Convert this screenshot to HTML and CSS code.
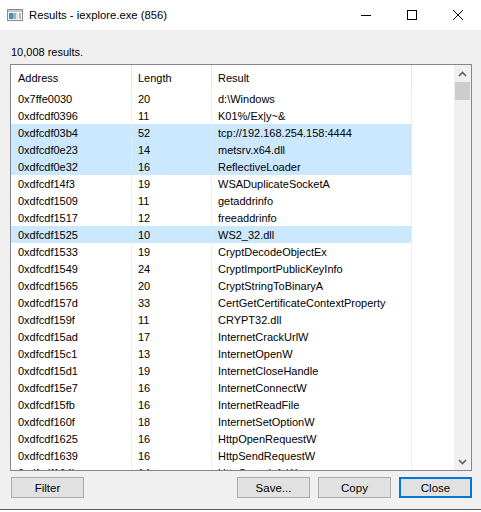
FILE: index.html
```html
<!DOCTYPE html>
<html>
<head>
<meta charset="utf-8">
<link rel="stylesheet" href="styles.css">
</head>
<body>
<div class="window">
  <div class="titlebar">
    <svg class="appicon" width="16" height="12" viewBox="0 0 16 12">
      <rect x="0.5" y="0.5" width="15" height="11" fill="#f4f4f4" stroke="#8a8a8a"/>
      <rect x="1" y="1" width="14" height="2" fill="#c8c8c8"/>
      <rect x="2" y="4" width="4" height="6" fill="#4b8fb0"/>
      <rect x="6" y="4" width="3" height="6" fill="#8fc0a8"/>
      <rect x="9" y="4" width="2" height="6" fill="#d8e6e0"/>
      <rect x="12" y="4" width="2" height="6" fill="#b0b8c0"/>
    </svg>
    <span class="title">Results - iexplore.exe (856)</span>
    <div class="caption-buttons">
      <div class="cbtn">
        <svg width="10" height="10" viewBox="0 0 10 10"><line x1="0" y1="5.5" x2="10" y2="5.5" stroke="#000" stroke-width="1"/></svg>
      </div>
      <div class="cbtn">
        <svg width="10" height="10" viewBox="0 0 10 10"><rect x="0.5" y="0.5" width="9" height="9" fill="none" stroke="#000" stroke-width="1"/></svg>
      </div>
      <div class="cbtn">
        <svg width="10" height="10" viewBox="0 0 10 10"><path d="M0 0 L10 10 M10 0 L0 10" stroke="#000" stroke-width="1"/></svg>
      </div>
    </div>
  </div>
  <div class="content">
    <div class="count">10,008 results.</div>
    <div class="list">
      <div class="table">
        <div class="row header"><div class="c">Address</div><div class="c">Length</div><div class="c">Result</div><div class="c"></div></div>
        <div class="row"><div class="c">0x7ffe0030</div><div class="c">20</div><div class="c">d:\Windows</div><div class="c"></div></div>
        <div class="row"><div class="c">0xdfcdf0396</div><div class="c">11</div><div class="c">K01%/Ex|y~&amp;</div><div class="c"></div></div>
        <div class="row sel"><div class="c">0xdfcdf03b4</div><div class="c">52</div><div class="c">tcp://192.168.254.158:4444</div><div class="c"></div></div>
        <div class="row sel"><div class="c">0xdfcdf0e23</div><div class="c">14</div><div class="c">metsrv.x64.dll</div><div class="c"></div></div>
        <div class="row sel"><div class="c">0xdfcdf0e32</div><div class="c">16</div><div class="c">ReflectiveLoader</div><div class="c"></div></div>
        <div class="row"><div class="c">0xdfcdf14f3</div><div class="c">19</div><div class="c">WSADuplicateSocketA</div><div class="c"></div></div>
        <div class="row"><div class="c">0xdfcdf1509</div><div class="c">11</div><div class="c">getaddrinfo</div><div class="c"></div></div>
        <div class="row"><div class="c">0xdfcdf1517</div><div class="c">12</div><div class="c">freeaddrinfo</div><div class="c"></div></div>
        <div class="row sel"><div class="c">0xdfcdf1525</div><div class="c">10</div><div class="c">WS2_32.dll</div><div class="c"></div></div>
        <div class="row"><div class="c">0xdfcdf1533</div><div class="c">19</div><div class="c">CryptDecodeObjectEx</div><div class="c"></div></div>
        <div class="row"><div class="c">0xdfcdf1549</div><div class="c">24</div><div class="c">CryptImportPublicKeyInfo</div><div class="c"></div></div>
        <div class="row"><div class="c">0xdfcdf1565</div><div class="c">20</div><div class="c">CryptStringToBinaryA</div><div class="c"></div></div>
        <div class="row"><div class="c">0xdfcdf157d</div><div class="c">33</div><div class="c">CertGetCertificateContextProperty</div><div class="c"></div></div>
        <div class="row"><div class="c">0xdfcdf159f</div><div class="c">11</div><div class="c">CRYPT32.dll</div><div class="c"></div></div>
        <div class="row"><div class="c">0xdfcdf15ad</div><div class="c">17</div><div class="c">InternetCrackUrlW</div><div class="c"></div></div>
        <div class="row"><div class="c">0xdfcdf15c1</div><div class="c">13</div><div class="c">InternetOpenW</div><div class="c"></div></div>
        <div class="row"><div class="c">0xdfcdf15d1</div><div class="c">19</div><div class="c">InternetCloseHandle</div><div class="c"></div></div>
        <div class="row"><div class="c">0xdfcdf15e7</div><div class="c">16</div><div class="c">InternetConnectW</div><div class="c"></div></div>
        <div class="row"><div class="c">0xdfcdf15fb</div><div class="c">16</div><div class="c">InternetReadFile</div><div class="c"></div></div>
        <div class="row"><div class="c">0xdfcdf160f</div><div class="c">18</div><div class="c">InternetSetOptionW</div><div class="c"></div></div>
        <div class="row"><div class="c">0xdfcdf1625</div><div class="c">16</div><div class="c">HttpOpenRequestW</div><div class="c"></div></div>
        <div class="row"><div class="c">0xdfcdf1639</div><div class="c">16</div><div class="c">HttpSendRequestW</div><div class="c"></div></div>
        <div class="row"><div class="c">0xdfcdf164b</div><div class="c">14</div><div class="c">HttpQueryInfoW</div><div class="c"></div></div>
      </div>
      <div class="scrollbar">
        <div class="arrow">
          <svg width="9" height="6" viewBox="0 0 9 6"><polyline points="1,5 4.5,1.5 8,5" fill="none" stroke="#606060" stroke-width="1.6"/></svg>
        </div>
        <div class="thumb"></div>
        <div class="track"></div>
        <div class="arrow">
          <svg width="9" height="6" viewBox="0 0 9 6"><polyline points="1,1 4.5,4.5 8,1" fill="none" stroke="#606060" stroke-width="1.6"/></svg>
        </div>
      </div>
    </div>
    <div class="buttons">
      <div class="btn">Filter</div>
      <div class="spacer"></div>
      <div class="btn">Save...</div>
      <div class="btn">Copy</div>
      <div class="btn default">Close</div>
    </div>
  </div>
  <div class="bottomedge"></div>
</div>
</body>
</html>
```

FILE: styles.css
```css
* { box-sizing: border-box; }
html, body { margin: 0; padding: 0; }
body {
  width: 481px;
  height: 512px;
  overflow: hidden;
  background: #ffffff;
  font-family: "Liberation Sans", Arial, sans-serif;
  font-size: 11px;
  color: #000;
}
.window {
  width: 481px;
  height: 512px;
  display: flex;
  flex-direction: column;
}
.titlebar {
  height: 30px;
  background: #fff;
  display: flex;
  align-items: center;
  padding-left: 7px;
}
.appicon { margin-right: 6px; }
.title { font-size: 11.3px; color: #000; flex: 1; }
.caption-buttons { display: flex; height: 30px; }
.cbtn {
  width: 46px;
  height: 30px;
  display: flex;
  align-items: center;
  justify-content: center;
}
.content {
  background: #f0f0f0;
  flex: 1;
  display: flex;
  flex-direction: column;
  padding: 0 9px 0 10px;
}
.count {
  height: 34px;
  padding-top: 16px;
  padding-left: 1px;
}
.list {
  height: 407px;
  border: 1px solid #828790;
  background: #fff;
  display: flex;
  overflow: hidden;
}
.table { flex: 1; overflow: hidden; }
.row {
  display: grid;
  grid-template-columns: 121px 80px 200px 1fr;
  height: 17px;
}
.c {
  padding-left: 6px;
  padding-top: 1px;
  line-height: 16px;
  border-right: 1px solid #f0f0f0;
  white-space: nowrap;
  overflow: hidden;
}
.row.header { height: 25px; }
.row.header .c { padding-top: 3px; line-height: 20px; border-right-color: #e5e5e5; }
.row .c:first-child { padding-left: 7px; }
.row .c:last-child { border-right: none; }
.row.sel .c:nth-child(-n+3) { background: #cce8ff; border-right-color: #d9eefc; }
.scrollbar {
  width: 17px;
  background: #f0f0f0;
  display: flex;
  flex-direction: column;
}
.arrow {
  height: 17px;
  display: flex;
  align-items: center;
  justify-content: center;
}
.thumb { height: 18px; margin: 0 1px; background: #cdcdcd; }
.track { flex: 1; }
.buttons {
  display: flex;
  gap: 8px;
  margin-top: 6px;
  padding-left: 1px;
}
.spacer { flex: 1; }
.btn {
  width: 73px;
  height: 21px;
  border: 1px solid #adadad;
  background: #e1e1e1;
  display: flex;
  align-items: center;
  justify-content: center;
  font-size: 11.5px;
}
.btn.default { border: 2px solid #0078d7; }
.bottomedge {
  height: 3px;
  border-top: 1px solid #5a5a5a;
  background: #fff;
}
```
